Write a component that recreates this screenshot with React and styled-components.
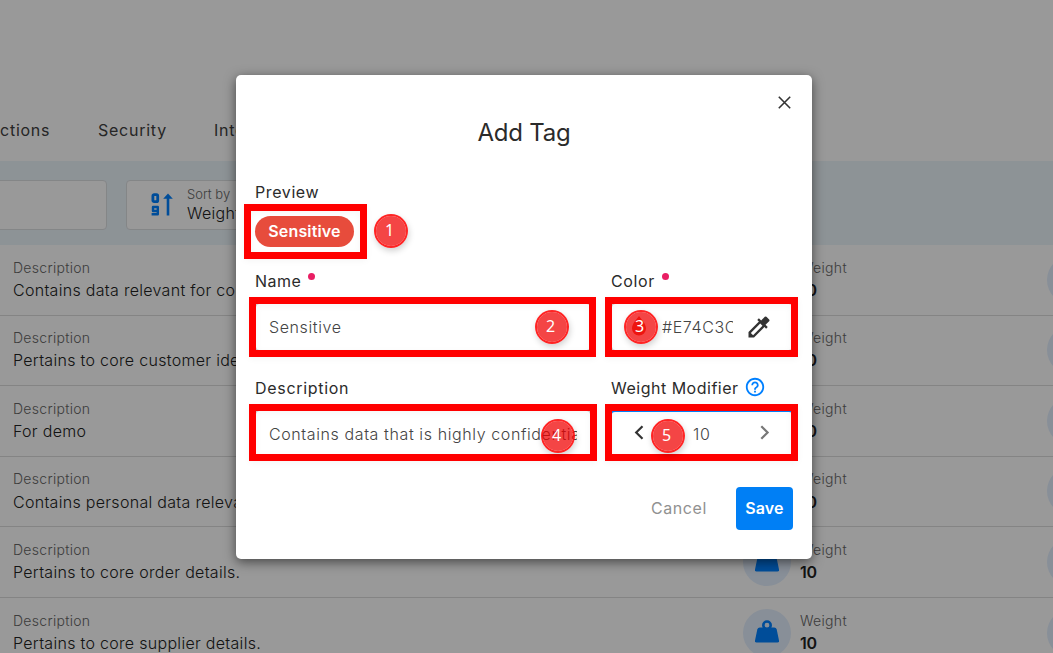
import React from "react";
import styled, { createGlobalStyle } from "styled-components";
import { MdHelpOutline, MdColorize } from "react-icons/md";

const GlobalStyle = createGlobalStyle`
  * { box-sizing: border-box; }
  body { margin: 0; overflow: hidden; background: #fff; color: #2b2b2b;
    font-family: Inter, "Liberation Sans", sans-serif; }
  button { font-family: inherit; border: 0; background: none; padding: 0; }
  svg { display: block; flex: none; }
`;

const Screen = styled.div`
  position: relative;
  width: 1053px;
  height: 653px;
  overflow: hidden;
`;

const Tabs = styled.nav`
  display: flex;
  gap: 48px;
  height: 161px;
  padding-top: 120px;
`;

const Tab = styled.span`
  width: ${(p) => p.$width}px;
  white-space: nowrap;
  font-size: 16px;
  line-height: 20px;
  font-weight: 400;
  letter-spacing: 0.75px;
  color: #404040;
`;

const FilterBar = styled.div`
  display: flex;
  gap: 19px;
  height: 84px;
  padding: 19px 0;
  background: #ebf5fb;
`;

const FilterBox = styled.div`
  display: flex;
  align-items: center;
  gap: 14px;
  width: ${(p) => p.$width}px;
  height: 50px;
  padding-left: ${(p) => p.$inset || 0}px;
  padding-bottom: 2px;
  margin-left: ${(p) => p.$shift || 0}px;
  background: #fff;
  border: 1px solid #dcdfe2;
  border-radius: 4px;
`;

const Stack = styled.div`
  display: flex;
  flex-direction: column;
`;

const Caption = styled.span`
  font-size: ${(p) => p.$size || 14}px;
  line-height: 18px;
  font-weight: 300;
  letter-spacing: ${(p) => p.$track ?? 0.3}px;
  color: #666;
`;

const RowText = styled.span`
  margin-top: ${(p) => p.$gap ?? 3.1}px;
  font-size: 16px;
  line-height: 20px;
  font-weight: ${(p) => (p.$strong ? 600 : 300)};
  letter-spacing: ${(p) => (p.$strong ? -0.2 : 0.3)}px;
  color: #222;
  white-space: nowrap;
`;

const Row = styled.div`
  display: grid;
  grid-template-columns: 730px 57px 247px 60px;
  height: 70.58px;
  padding: 13.75px 0 0 13px;
  border-bottom: 1px solid #dcdcdc;
`;

const Disc = styled.div`
  display: flex;
  align-items: center;
  justify-content: center;
  width: 48px;
  height: 48px;
  margin-top: -3px;
  padding-bottom: 3px;
  border-radius: 50%;
  background: #e3effe;
`;

const Backdrop = styled.div`
  position: absolute;
  inset: 0;
  padding: 75px 0 0 236px;
  background: rgba(0, 0, 0, 0.4);
`;

const Dialog = styled.section`
  width: 576px;
  height: 484px;
  padding: 0 19px;
  background: #fff;
  border-radius: 5px;
  box-shadow: 0 3px 12px rgba(0, 0, 0, 0.55);
`;

const DialogTop = styled.div`
  display: flex;
  justify-content: flex-end;
  height: 45px;
  padding: 21px 2px 0 0;
`;

const Title = styled.h1`
  margin: 0;
  height: 62px;
  text-align: center;
  font-size: 24px;
  line-height: 26px;
  font-weight: 400;
  letter-spacing: -0.2px;
  color: #2b2b2b;
`;

const Label = styled.div`
  display: flex;
  gap: ${(p) => p.$gap || 7}px;
  height: ${(p) => p.$height || 32}px;
  font-size: 16px;
  line-height: 20px;
  font-weight: 400;
  letter-spacing: ${(p) => p.$track ?? 0.6}px;
  color: #2b2b2b;
  white-space: nowrap;
`;

const Required = styled.i`
  width: 7px;
  height: 7px;
  margin-top: 2px;
  border-radius: 50%;
  background: #e91e63;
`;

const HelpIcon = styled(MdHelpOutline)`
  margin-top: -2px;
  color: #0080ff;
`;

const Chip = styled.div`
  display: flex;
  align-items: center;
  justify-content: center;
  width: 99px;
  height: 31px;
  margin-bottom: 24px;
  padding-bottom: 2px;
  border-radius: 16px;
  background: #e74c3c;
  color: #fff;
  font-size: 16px;
  font-weight: 600;
  letter-spacing: 0.15px;
`;

const Fields = styled.div`
  display: grid;
  grid-template-columns: 336px 182px;
  column-gap: 20px;
  row-gap: 27px;
`;

const Input = styled.div`
  display: flex;
  align-items: center;
  height: 48px;
  padding: 0 13px 1px;
  border: 1px solid #c4c4c4;
  border-color: ${(p) => (p.$focus ? "#0080ff" : "#c4c4c4")};
  border-top-width: ${(p) => (p.$focus ? 2 : 1)}px;
  border-radius: 4px;
  color: #444;
  font-size: 16px;
  font-weight: 300;
  letter-spacing: 0.6px;
`;

const Value = styled.span`
  width: ${(p) => (p.$width ? `${p.$width}px` : "auto")};
  margin-left: ${(p) => p.$left || 0}px;
  margin-right: ${(p) => p.$right || 0}px;
  overflow: hidden;
  white-space: nowrap;
`;

const Stepper = styled.button`
  display: flex;
  padding: 0 0 4px ${(p) => p.$inset || 0}px;
`;

const DropSlot = styled.span`
  display: flex;
  padding: 0 15px 2px 6px;
`;

const Actions = styled.div`
  display: flex;
  justify-content: flex-end;
  align-items: center;
  gap: 29px;
  margin: 29px 0 0;
`;

const Cancel = styled.button`
  padding-bottom: 2px;
  color: #919191;
  font-size: 16px;
  font-weight: 400;
  letter-spacing: 0.6px;
`;

const Save = styled.button`
  width: 57px;
  height: 43px;
  padding-bottom: 2px;
  border-radius: 4px;
  background: #007ff5;
  color: #fff;
  font-size: 16px;
  font-weight: 600;
  letter-spacing: 0.1px;
`;

const Outline = styled.div`
  position: absolute;
  left: ${(p) => p.$x}px;
  top: ${(p) => p.$y}px;
  width: ${(p) => p.$w}px;
  height: ${(p) => p.$h}px;
  border: 7px solid #f00;
  box-shadow: 0 2px 7px rgba(0, 0, 0, 0.04), inset 0 2px 7px rgba(0, 0, 0, 0.04);
`;

const Marker = styled.div`
  position: absolute;
  left: ${(p) => p.$x - 17}px;
  top: ${(p) => p.$y - 17}px;
  display: flex;
  align-items: center;
  justify-content: center;
  width: 34px;
  height: 34px;
  padding: 0 2px 2px 0;
  border: 2px solid rgba(255, 0, 0, 0.86);
  border-radius: 50%;
  background: rgba(240, 0, 0, 0.73);
  background-clip: padding-box;
  box-shadow: 1px 3px 6px rgba(0, 0, 0, 0.18);
  color: #fff;
  font-family: "Noto Sans", sans-serif;
  font-size: 16px;
  line-height: 20px;
`;

const WeightIcon = () => (
  <svg width="24" height="23" viewBox="0 0 24 23">
    <path d="M4.8 7.5H19.2Q21.2 7.5 21.7 9.6L24 20.4Q24.2 22.5 22.4 22.5H1.6Q-.2 22.5 0 20.4L2.3 9.6Q2.8 7.5 4.8 7.5Z" fill="#0080ff" />
    <circle cx="12" cy="5.2" r="3.7" fill="#e3effe" stroke="#0080ff" strokeWidth="2.6" />
  </svg>
);

const SortIcon = () => (
  <svg width="22" height="23" viewBox="0 0 22 23" fill="none" stroke="#0080ff" strokeWidth="2.8">
    <rect x="1.9" y="1.7" width="4.8" height="7" rx="1.2" />
    <path d="M7.2 18H2V14H6.8V21.3H.6" strokeWidth="2.4" strokeLinejoin="round" />
    <path d="M17 22.5V3" strokeWidth="2.6" />
    <path d="M12.2 5.8L17 .6L21.8 5.8Z" fill="#0080ff" stroke="none" />
  </svg>
);

const Chevron = ({ right, color }) => (
  <svg width="10" height="15" viewBox="0 0 10 15" fill="none" stroke={color} strokeWidth="2.2">
    <path d={right ? "M1.3 1.2L7.6 7.5L1.3 13.8" : "M8.5 1.2L2.2 7.5L8.5 13.8"} />
  </svg>
);

const descriptions = [
  "Contains data relevant for compliance.",
  "Pertains to core customer identity.",
  "For demo",
  "Contains personal data relevant to users.",
  "Pertains to core order details.",
  "Pertains to core supplier details.",
];

const outlines = [
  [244, 204, 123, 55],
  [249, 297, 347, 60],
  [605, 297, 193, 60],
  [249, 404, 348, 57],
  [605, 404, 193, 57],
];

const markers = [
  [390.7, 230.7],
  [551.7, 326.7],
  [640.7, 326.7],
  [557.7, 435.7],
  [667.7, 435.7],
];

export default function App() {
  return (
    <Screen>
      <GlobalStyle />
      <Tabs>
        <Tab $width={50}>ctions</Tab>
        <Tab $width={68}>Security</Tab>
        <Tab $width={100}>Integrations</Tab>
      </Tabs>
      <FilterBar>
        <FilterBox $width={117} $shift={-10} />
        <FilterBox $width={240} $inset={24}>
          <SortIcon />
          <Stack>
            <Caption $size={13} $track={0}>Sort by</Caption>
            <RowText $gap={0}>Weight</RowText>
          </Stack>
        </FilterBox>
      </FilterBar>
      {descriptions.map((text) => (
        <Row key={text}>
          <Stack>
            <Caption>Description</Caption>
            <RowText>{text}</RowText>
          </Stack>
          <Disc><WeightIcon /></Disc>
          <Stack>
            <Caption>Weight</Caption>
            <RowText $strong>10</RowText>
          </Stack>
          <Disc />
        </Row>
      ))}
      <Backdrop>
        <Dialog>
          <DialogTop>
            <svg width="13" height="13" viewBox="0 0 13 13" stroke="#333" strokeWidth="1.6">
              <path d="M.8 .8L12.2 12.2M12.2 .8L.8 12.2" />
            </svg>
          </DialogTop>
          <Title>Add Tag</Title>
          <Label $height={34}>Preview</Label>
          <Chip>Sensitive</Chip>
          <Fields>
            <div>
              <Label $track={0.5}>Name <Required /></Label>
              <Input><Value>Sensitive</Value></Input>
            </div>
            <div>
              <Label>Color <Required /></Label>
              <Input>
                <DropSlot>
                  <svg width="16" height="20" viewBox="0 0 16 20">
                    <path d="M8 0C11 4 15 8 15 12.5A7 7 0 0 1 1 12.5C1 8 5 4 8 0Z" fill="#e74c3c" />
                  </svg>
                </DropSlot>
                <Value $width={71} $right={12}>#E74C3C</Value>
                <MdColorize size={28} color="#333" />
              </Input>
            </div>
            <div>
              <Label $track={0.7}>Description</Label>
              <Input><Value>Contains data that is highly confidential</Value></Input>
            </div>
            <div>
              <Label $gap={5} $track={0.5}>Weight Modifier <HelpIcon size={22} /></Label>
              <Input $focus>
                <Stepper $inset={9}><Chevron color="#333" /></Stepper>
                <Value $left={49} $right={50}>10</Value>
                <Stepper><Chevron right color="#777" /></Stepper>
              </Input>
            </div>
          </Fields>
          <Actions>
            <Cancel>Cancel</Cancel>
            <Save>Save</Save>
          </Actions>
        </Dialog>
      </Backdrop>
      {outlines.map(([x, y, w, h]) => (
        <Outline key={`${x}-${y}`} $x={x} $y={y} $w={w} $h={h} />
      ))}
      {markers.map(([x, y], i) => (
        <Marker key={x} $x={x} $y={y}>{i + 1}</Marker>
      ))}
    </Screen>
  );
}
